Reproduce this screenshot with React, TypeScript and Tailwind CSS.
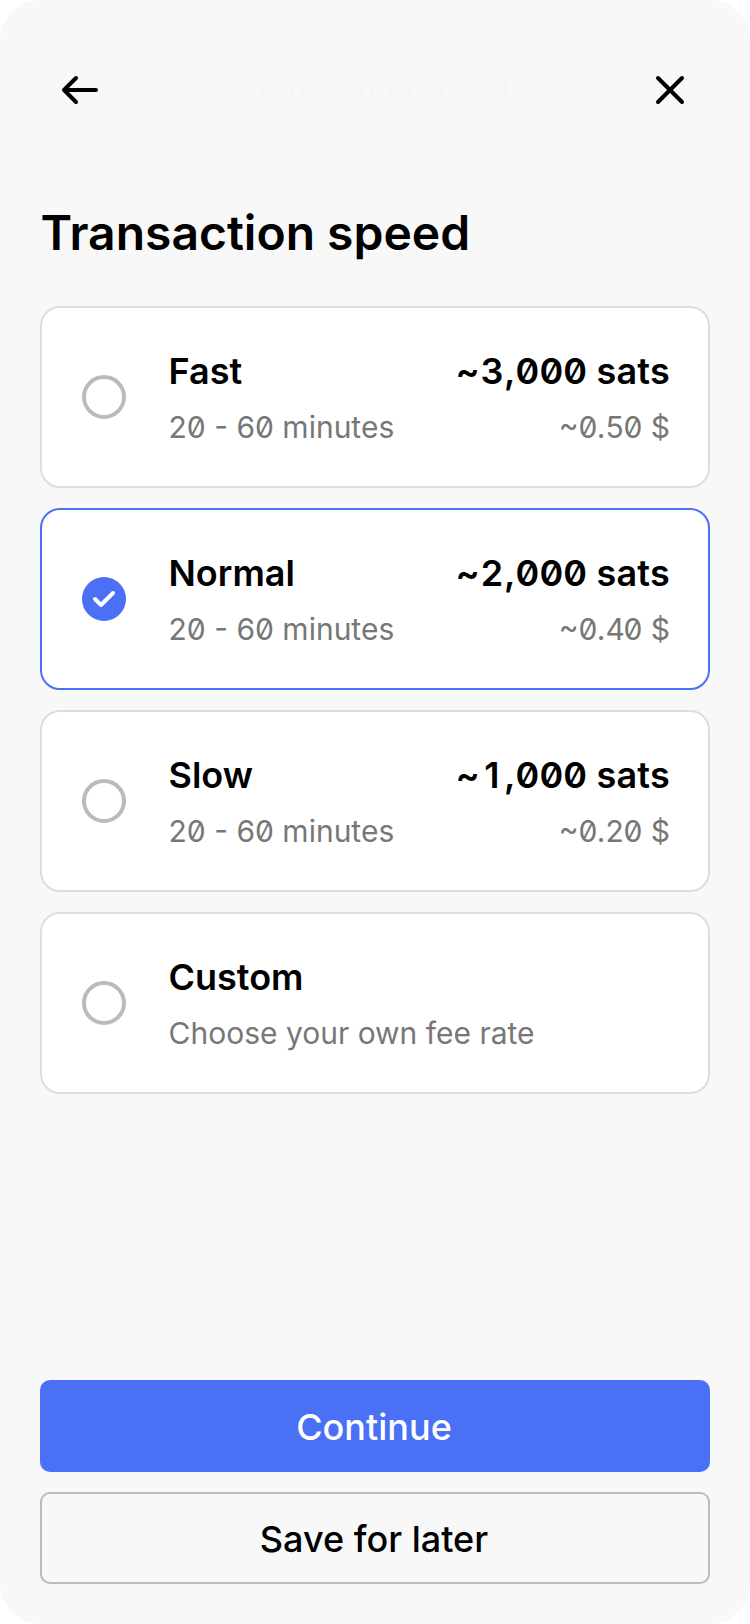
const rows = [
  { name: "Fast", desc: "20 - 60 minutes", fee: ["~", "3", ",000 sats"], fiat: ["~0.", "5", "0 $"] },
  { name: "Normal", desc: "20 - 60 minutes", fee: ["~", "2", ",000 sats"], fiat: ["~0.", "4", "0 $"], selected: true },
  { name: "Slow", desc: "20 - 60 minutes", fee: ["~", "1", ",000 sats"], fiat: ["~0.", "2", "0 $"] },
  { name: "Custom", desc: "Choose your own fee rate" },
];

export default function App() {
  return (
    <div className="h-[1624px] w-[750px] bg-white font-['Inter',sans-serif] [font-feature-settings:'zero']">
      <main className="flex h-full flex-col rounded-[40px] bg-[#f8f8f8] px-10 pb-10 text-black">
        <header className="flex h-[180px] items-center justify-between px-5">
          <button aria-label="Back">
            <svg width="40" height="40" viewBox="0 0 40 40" fill="none" stroke="black" strokeWidth="4" strokeLinecap="round" strokeLinejoin="round">
              <path d="M36 20H4M16 8L4 20L16 32" />
            </svg>
          </button>
          <span className="text-[30px] font-semibold text-[#f6f6f6]">Transaction speed</span>
          <button aria-label="Close">
            <svg width="40" height="40" viewBox="0 0 40 40" fill="none" stroke="black" strokeWidth="4" strokeLinecap="round">
              <path d="M8 8L32 32M32 8L8 32" />
            </svg>
          </button>
        </header>
        <h1 className="mt-[23px] pl-[0.5px] text-[48px] leading-[60px] font-semibold">Transaction speed</h1>
        <div className="mt-[43px] flex flex-col gap-5">
          {rows.map((r) => (
            <section key={r.name} className={`flex h-[182px] items-center rounded-[20px] border-2 bg-white pr-[38px] pl-10 ${r.selected ? "border-[#4a70f6]" : "border-[#dddddd]"}`}>
              {r.selected ? (
                <svg width="44" height="44" viewBox="0 0 44 44" fill="none">
                  <circle cx="22" cy="22" r="22" fill="#4a70f6" />
                  <path d="M13 22L19 28L31 16" stroke="white" strokeWidth="4" strokeLinecap="round" strokeLinejoin="round" />
                </svg>
              ) : (
                <span className="size-11 rounded-full border-4 border-[#bbbbbb]" />
              )}
              <div className="ml-[42.5px] flex-1 pt-1">
                <div className="flex justify-between text-[36px] leading-[56px] font-semibold">
                  <span>{r.name}</span>
                  {r.fee && (
                    <span className="tracking-[0.15px] [font-kerning:none]">
                      {r.fee[0]}<span className="inline-block w-6 text-center">{r.fee[1]}</span>{r.fee[2]}
                    </span>
                  )}
                </div>
                <div className="flex justify-between text-[30px] leading-[56px] text-[#777777]">
                  <span>{r.desc}</span>
                  {r.fiat && (
                    <span>
                      {r.fiat[0]}<span className="inline-block w-[18px] text-center">{r.fiat[1]}</span>{r.fiat[2]}
                    </span>
                  )}
                </div>
              </div>
            </section>
          ))}
        </div>
        <footer className="mt-auto flex flex-col gap-5">
          <button className="h-[92px] rounded-[10px] bg-[#4a70f6] pt-0.5 pr-0.5 text-[36px] font-medium text-white">Continue</button>
          <button className="h-[92px] rounded-[10px] border-2 border-[#bbbbbb] pt-0.5 pr-0.5 text-[36px] font-medium">Save for later</button>
        </footer>
      </main>
    </div>
  );
}
